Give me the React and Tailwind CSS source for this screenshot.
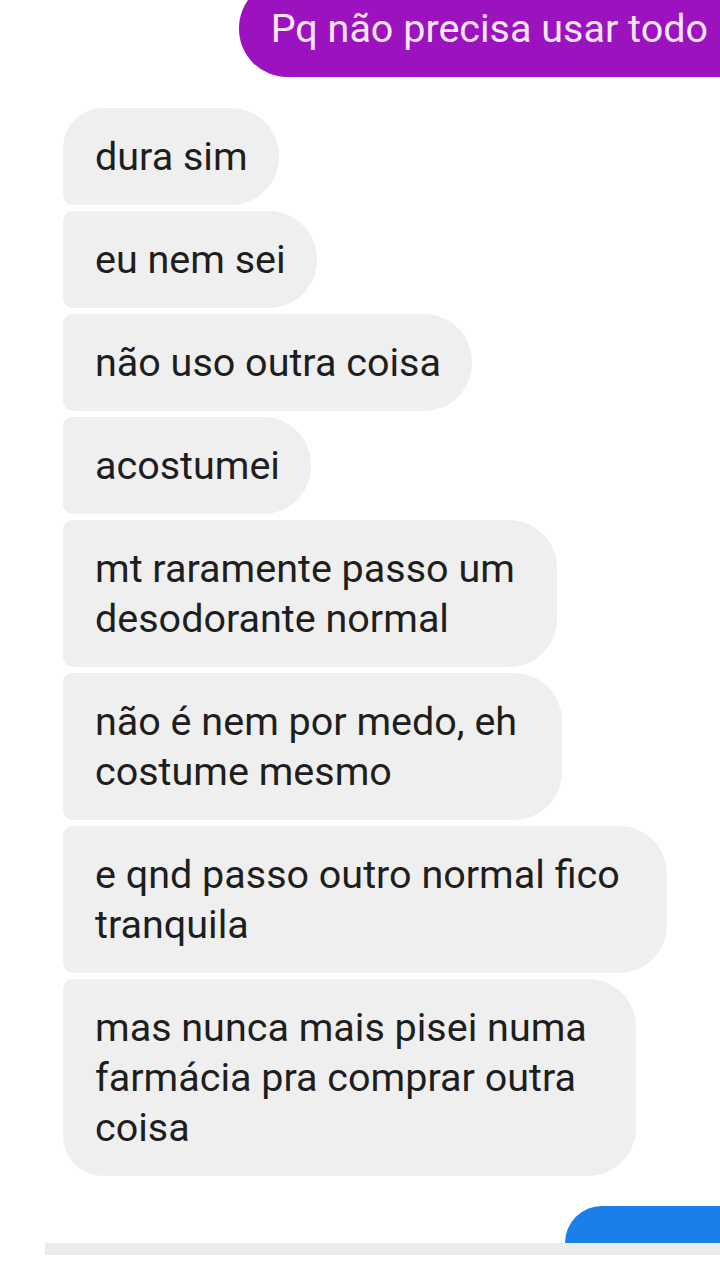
const messages = [
  { lines: ["dura sim"] },
  { lines: ["eu nem sei"] },
  { lines: ["não uso outra coisa"] },
  { lines: ["acostumei"] },
  { lines: ["mt raramente passo um", "desodorante normal"], w: "w-[494px]" },
  { lines: ["não é nem por medo, eh", "costume mesmo"], w: "w-[499px]" },
  { lines: ["e qnd passo outro normal fico", "tranquila"], w: "w-[604px]" },
  { lines: ["mas nunca mais pisei numa", "farmácia pra comprar outra", "coisa"], w: "w-[573px]" },
];

function corners(i, n) {
  if (i === 0) return "rounded-r-[48px] rounded-tl-[40px] rounded-bl-[10px]";
  if (i === n - 1) return "rounded-r-[48px] rounded-tl-[10px] rounded-bl-[40px]";
  return "rounded-r-[48px] rounded-l-[10px]";
}

export default function App() {
  return (
    <div
      className="w-[720px] h-[1280px] bg-white overflow-hidden flex flex-col"
      style={{ fontFamily: "Roboto, 'Noto Sans', sans-serif" }}
    >
      <div className="flex justify-end -mt-[20px]">
        <div className="bg-[#9c12be] text-[#f6e6fa] text-[39.5px] leading-[50px] pl-[32px] pr-[32px] pt-[24px] pb-[23px] rounded-l-[48px] -mr-[20px] whitespace-nowrap">
          Pq não precisa usar todo
        </div>
      </div>

      <div className="flex flex-col items-start gap-[6px] pl-[63px] mt-[31px]">
        {messages.map((m, i) => (
          <div
            key={i}
            className={`bg-[#efefef] text-[#1e1e1e] text-[39.5px] leading-[50px] pl-[32px] pr-[31px] pt-[24px] pb-[23px] whitespace-nowrap ${m.w ?? ""} ${corners(i, messages.length)}`}
          >
            {m.lines.map((l, j) => (
              <div key={j}>{l}</div>
            ))}
          </div>
        ))}
      </div>

      <div className="flex justify-end mt-[30px]">
        <div className="w-[160px] h-[37px] bg-[#1b7fea] rounded-tl-[40px] -mr-[5px]" />
      </div>
      <div className="h-[12px] bg-[#ececec] ml-[45px]" />
    </div>
  );
}
